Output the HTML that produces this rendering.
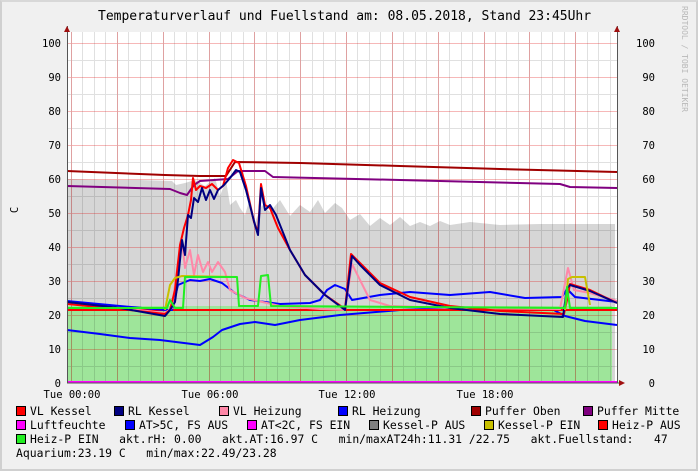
<!DOCTYPE html>
<html><head><meta charset="utf-8"><style>
html,body{margin:0;padding:0}
body{width:698px;height:471px;background:#f0f0f0;position:relative;overflow:hidden;font-family:"DejaVu Sans Mono","Liberation Mono",monospace}
.b{position:absolute;inset:0;border:2px solid #d0d0d0;border-top-color:#d8d8d8;box-sizing:border-box;pointer-events:none}
.t{position:absolute;white-space:pre;color:#000}
.lg{position:absolute;font-size:11.4px;white-space:pre;line-height:14px}
.sq{position:absolute;width:8px;height:8px;border:1px solid #000}
</style></head><body>
<div class="t" style="left:98px;top:9px;font-size:13px">Temperaturverlauf und Fuellstand am: 08.05.2018, Stand 23:45Uhr</div>
<div class="t" style="left:680px;top:6px;font-size:8px;color:#b8b8b8;writing-mode:vertical-rl">RRDTOOL / TOBI OETIKER</div>
<svg width="698" height="471" style="position:absolute;left:0;top:0" font-family="DejaVu Sans Mono, Liberation Mono, monospace" font-size="10.5">
<rect x="67" y="32" width="550" height="351" fill="#fff"/>
<path d="M67 383V179L100 180L140 180L172 181L176 185L185 183L195 180L205 186L215 178L220 196L226 180L230 205L236 200L240 208L245 215L250 198L255 222L262 205L270 212L280 200L290 216L300 205L310 212L318 200L325 213L335 203L342 208L350 220L360 214L370 226L380 218L390 225L400 217L410 226L420 222L430 226L440 221L450 225L470 222L500 225L540 224L580 224L615 224V383Z" fill="#d6d6d6"/>
<rect x="67" y="306" width="545" height="77" fill="#9ee59a"/>
<g id="grid"></g>
<g fill="none" stroke-linejoin="round" stroke-width="2">
<path d="M67 171L165 175L200 176L226 176L235 162L300 163L400 166L500 169L617 172" stroke="#a00000"/>
<path d="M67 186L170 189L180 193L187 195L194 185L200 181L228 179L238 171L265 171L273 177L400 180L560 184L570 187L617 188" stroke="#800080"/>
<path d="M67 330L100 334L130 338L160 340L200 345L213 337L222 330L240 324L255 322L275 325L300 320L340 315L400 310L460 308L550 308L565 316L585 321L617 325" stroke="#0000ff"/>
<path d="M67 310L617 310" stroke="#ff0000"/>
<path d="M67 301L120 306L165 310L172 310L178 285L185 282L190 280L200 281L210 279L222 283L235 293L250 300L280 304L310 303L320 300L327 290L335 285L345 289L352 300L380 295L410 292L450 295L490 292L525 298L562 297L567 289L575 297L600 300L617 302" stroke="#0000ff"/>
<path d="M67 303L120 308L165 313L172 308L178 262L182 240L185 268L190 250L194 275L198 255L203 272L208 262L212 272L218 262L225 272L230 290L245 298L280 306L320 309L345 310L352 264L360 280L370 300L390 306L450 308L560 309L568 268L574 290L590 293L617 301" stroke="#ff88a8"/>
<path d="M67 304L120 309L165 314L170 310L175 290L180 245L184 228L188 215L191 200L193 178L196 190L200 186L206 188L212 184L218 190L223 186L228 168L233 160L239 163L246 186L254 222L258 232L261 184L265 205L270 208L278 228L290 250L305 275L325 295L345 309L351 254L360 263L380 283L410 297L450 306L500 311L564 314L567 300L570 284L590 290L617 303" stroke="#ff0000"/>
<path d="M67 302L120 308L165 316L170 310L175 302L178 280L182 240L185 255L188 215L191 218L194 198L198 202L202 188L206 200L210 190L214 199L218 190L224 185L230 178L236 170L240 172L246 190L255 225L258 235L261 188L265 210L270 205L276 215L290 250L305 275L325 295L345 310L352 256L360 265L380 285L410 300L450 308L500 314L563 317L567 288L570 285L590 291L617 303" stroke="#000080"/>
<path d="M165 310L170 285L175 278L182 276L237 277" stroke="#c8c000"/>
<path d="M565 310L568 279L572 277L585 277L590 305" stroke="#c8c000"/>
<path d="M67 308L167 308L170 300L175 308L183 308L185 277L237 277L239 306L258 306L261 276L268 275L271 306L565 308L567 287L570 308L617 308" stroke="#22ee22"/>
<path d="M67 382L617 382" stroke="#ff00ff"/>
</g>
<path d="M67 383H623M67.5 383V26M617.5 383V26" stroke="#555" stroke-width="1" fill="none"/>
<path d="M64 32L67 26L70 32ZM614 32L617 26L620 32ZM619 380L625 383L619 386Z" fill="#a01010"/>
<g text-anchor="end">
<text x="61" y="47">100</text><text x="61" y="81">90</text><text x="61" y="115">80</text><text x="61" y="149">70</text><text x="61" y="183">60</text><text x="61" y="217">50</text><text x="61" y="251">40</text><text x="61" y="285">30</text><text x="61" y="319">20</text><text x="61" y="353">10</text><text x="61" y="387">0</text>
<text x="655" y="47">100</text><text x="655" y="81">90</text><text x="655" y="115">80</text><text x="655" y="149">70</text><text x="655" y="183">60</text><text x="655" y="217">50</text><text x="655" y="251">40</text><text x="655" y="285">30</text><text x="655" y="319">20</text><text x="655" y="353">10</text><text x="655" y="387">0</text>
</g>
<g text-anchor="middle">
<text x="72" y="398">Tue 00:00</text><text x="210" y="398">Tue 06:00</text><text x="347" y="398">Tue 12:00</text><text x="485" y="398">Tue 18:00</text>
</g>
<text x="18" y="210" transform="rotate(-90 18 210)" text-anchor="middle">C</text>
</svg>
<div class="sq" style="left:16px;top:406px;background:#f00"></div><div class="lg" style="left:30px;top:404px">VL Kessel</div>
<div class="sq" style="left:114px;top:406px;background:#000080"></div><div class="lg" style="left:128px;top:404px">RL Kessel</div>
<div class="sq" style="left:219px;top:406px;background:#ff88a8"></div><div class="lg" style="left:233px;top:404px">VL Heizung</div>
<div class="sq" style="left:338px;top:406px;background:#00f"></div><div class="lg" style="left:352px;top:404px">RL Heizung</div>
<div class="sq" style="left:471px;top:406px;background:#a00000"></div><div class="lg" style="left:485px;top:404px">Puffer Oben</div>
<div class="sq" style="left:583px;top:406px;background:#800080"></div><div class="lg" style="left:597px;top:404px">Puffer Mitte</div>
<div class="sq" style="left:16px;top:420px;background:#f0f"></div><div class="lg" style="left:30px;top:418px">Luftfeuchte</div>
<div class="sq" style="left:125px;top:420px;background:#00f"></div><div class="lg" style="left:139px;top:418px">AT&gt;5C, FS AUS</div>
<div class="sq" style="left:247px;top:420px;background:#f0f"></div><div class="lg" style="left:261px;top:418px">AT&lt;2C, FS EIN</div>
<div class="sq" style="left:369px;top:420px;background:#808080"></div><div class="lg" style="left:383px;top:418px">Kessel-P AUS</div>
<div class="sq" style="left:484px;top:420px;background:#c8c000"></div><div class="lg" style="left:498px;top:418px">Kessel-P EIN</div>
<div class="sq" style="left:598px;top:420px;background:#f00"></div><div class="lg" style="left:612px;top:418px">Heiz-P AUS</div>
<div class="sq" style="left:16px;top:434px;background:#22ee22"></div><div class="lg" style="left:30px;top:432px">Heiz-P EIN   akt.rH: 0.00   akt.AT:16.97 C   min/maxAT24h:11.31 /22.75   akt.Fuellstand:   47</div>
<div class="lg" style="left:16px;top:446px">Aquarium:23.19 C   min/max:22.49/23.28</div>
<div class="b"></div>
<script>
(function(){
var ns="http://www.w3.org/2000/svg",g=document.getElementById("grid"),s="",h=550/24;
for(var i=0;i<=47;i++){var x=71+i*h/2; if(x>616)break; s+="M"+(Math.round(x)+0.5)+" 32V383";}
for(var v=5;v<=100;v+=10){var y=383-v*3.4; s+="M67 "+(Math.round(y)+0.5)+"H617";}
var p=document.createElementNS(ns,"path");p.setAttribute("d",s);p.setAttribute("stroke","#000");p.setAttribute("stroke-opacity","0.12");p.setAttribute("stroke-width","1");g.appendChild(p);
s="";
for(var i=0;i<=11;i++){var x=71+i*2*h; s+="M"+(Math.round(x)+0.5)+" 32V383";}
for(var v=10;v<=100;v+=10){var y=383-v*3.4; s+="M67 "+(Math.round(y)+0.5)+"H617";}
var q=document.createElementNS(ns,"path");q.setAttribute("d",s);q.setAttribute("stroke","#e00000");q.setAttribute("stroke-opacity","0.28");q.setAttribute("stroke-width","1");g.appendChild(q);
})();
</script>
</body></html>
